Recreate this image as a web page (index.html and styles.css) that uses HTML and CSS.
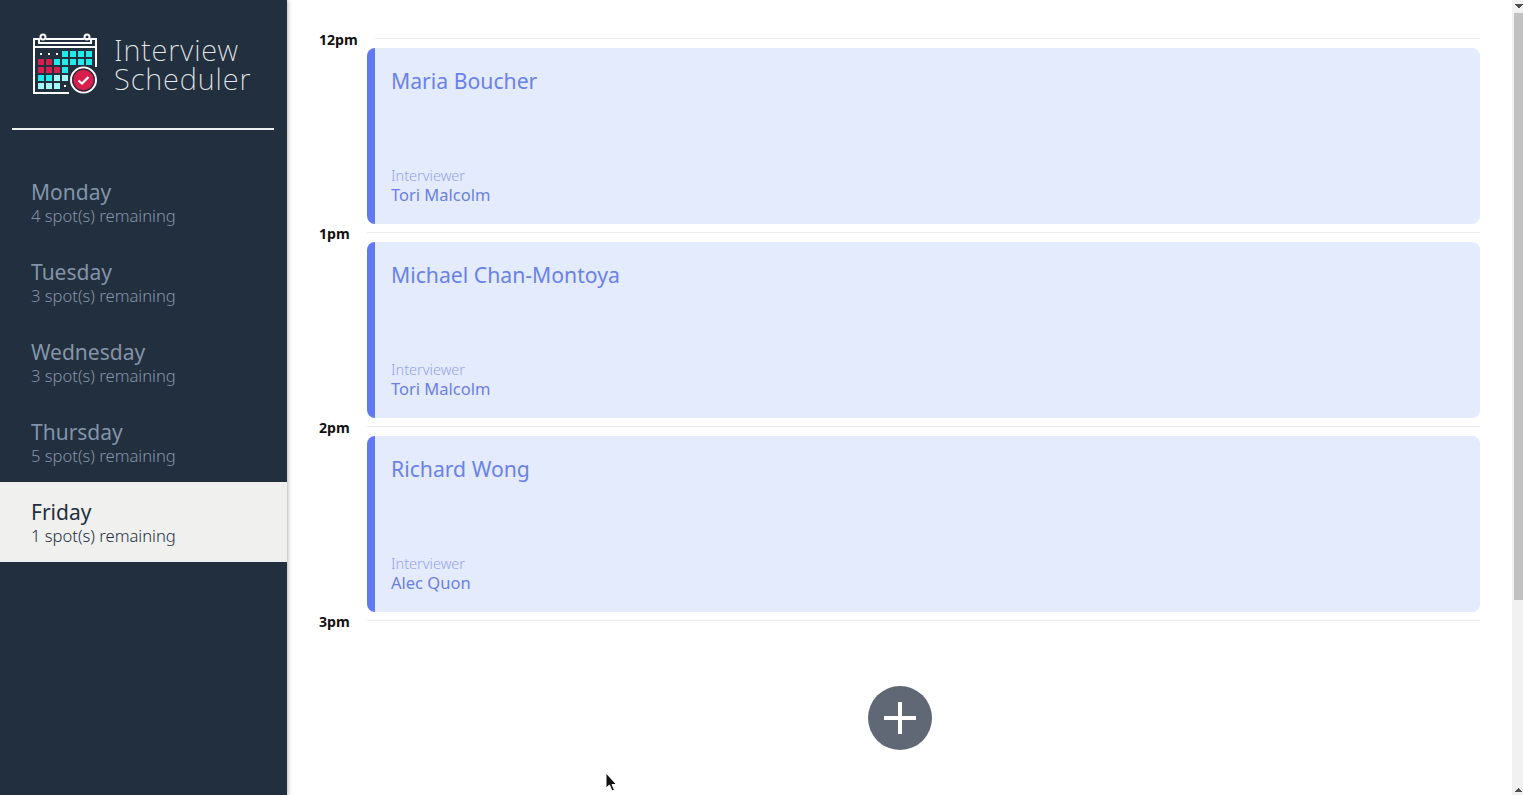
FILE: index.html
```html
<!DOCTYPE html>
<html lang="en">
<head>
    <meta charset="UTF-8">
    <title>Interview Scheduler</title>
    <link rel="stylesheet" href="styles.css">
</head>
<body>
    <nav class="sidebar">
        <div class="brand">
            <svg class="brand-logo" width="66" height="62" viewBox="32 33 66 62">
                <g fill="none" stroke="#fff" stroke-width="2">
                    <path d="M69 93H34V39H40M86 39H96V67"/>
                    <path d="M34 47H96"/>
                    <path d="M40 39H39V43H91V39H90M46 39H84"/>
                    <circle cx="43" cy="37" r="2.500"/>
                    <circle cx="87" cy="37" r="2.500"/>
                </g>
                <g fill="#fff">
                    <rect x="40" y="53" width="2" height="2"/>
                    <rect x="48" y="53" width="2" height="2"/>
                    <rect x="56" y="53" width="2" height="2"/>
                    <rect x="64" y="85" width="2" height="2"/>
                </g>
                <g fill="#22eaea">
                    <rect x="62" y="51" width="6" height="6"/>
                    <rect x="70" y="51" width="6" height="6"/>
                    <rect x="78" y="51" width="6" height="6"/>
                    <rect x="86" y="51" width="6" height="6"/>
                    <rect x="54" y="59" width="6" height="6"/>
                    <rect x="62" y="59" width="6" height="6"/>
                    <rect x="70" y="59" width="6" height="6"/>
                    <rect x="78" y="59" width="6" height="6"/>
                    <rect x="86" y="59" width="6" height="6"/>
                    <rect x="62" y="67" width="6" height="6"/>
                    <rect x="38" y="75" width="6" height="6"/>
                    <rect x="46" y="75" width="6" height="6"/>
                </g>
                <g fill="#d81e4c">
                    <rect x="38" y="59" width="6" height="6"/>
                    <rect x="46" y="59" width="6" height="6"/>
                    <rect x="38" y="67" width="6" height="6"/>
                    <rect x="46" y="67" width="6" height="6"/>
                    <rect x="54" y="67" width="6" height="6"/>
                </g>
                <g fill="#a5fafa">
                    <rect x="54" y="75" width="6" height="6"/>
                    <rect x="62" y="75" width="6" height="6"/>
                    <rect x="38" y="83" width="6" height="6"/>
                    <rect x="46" y="83" width="6" height="6"/>
                    <rect x="54" y="83" width="6" height="6"/>
                </g>
                <circle cx="83.500" cy="80" r="12.500" fill="#d81e4c" stroke="#fff" stroke-width="2"/>
                <circle cx="83.500" cy="80" r="10.800" fill="none" stroke="#222f3e" stroke-width="1.200"/>
                <path d="M78.500 80.500L82 83.500L88.500 77" fill="none" stroke="#fff" stroke-width="2.200"/>
            </svg>
            <div class="brand-name">Interview<br>Scheduler</div>
        </div>
        <hr class="sidebar-sep">
        <ul class="day-list">
            <li class="day"><h2>Monday</h2><p>4 spot(s) remaining</p></li>
            <li class="day"><h2>Tuesday</h2><p>3 spot(s) remaining</p></li>
            <li class="day"><h2>Wednesday</h2><p>3 spot(s) remaining</p></li>
            <li class="day"><h2>Thursday</h2><p>5 spot(s) remaining</p></li>
            <li class="day day-selected"><h2>Friday</h2><p>1 spot(s) remaining</p></li>
        </ul>
    </nav>

    <main class="schedule">
        <article class="slot">
            <header class="slot-head"><h4>12pm</h4><hr></header>
            <div class="card">
                <h2>Maria Boucher</h2>
                <div class="card-foot">
                    <h4>Interviewer</h4>
                    <h3>Tori Malcolm</h3>
                </div>
            </div>
        </article>
        <article class="slot">
            <header class="slot-head"><h4>1pm</h4><hr></header>
            <div class="card">
                <h2>Michael Chan-Montoya</h2>
                <div class="card-foot">
                    <h4>Interviewer</h4>
                    <h3>Tori Malcolm</h3>
                </div>
            </div>
        </article>
        <article class="slot">
            <header class="slot-head"><h4>2pm</h4><hr></header>
            <div class="card">
                <h2>Richard Wong</h2>
                <div class="card-foot">
                    <h4>Interviewer</h4>
                    <h3>Alec Quon</h3>
                </div>
            </div>
        </article>
        <article class="slot slot-last">
            <header class="slot-head"><h4>3pm</h4><hr></header>
            <button class="add-btn" aria-label="Add">
                <svg width="32" height="32" viewBox="0 0 32 32"><path d="M0 14H32V18H0ZM14 0H18V32H14Z" fill="#fff"/></svg>
            </button>
        </article>
    </main>

    <div class="scrollbar">
        <div class="scroll-arrow scroll-arrow-up"></div>
        <div class="scroll-thumb"></div>
        <div class="scroll-rest"></div>
        <div class="scroll-arrow scroll-arrow-down"></div>
    </div>

    <svg class="cursor" width="14" height="20" viewBox="0 0 14 20">
        <path d="M1 1V16L4.500 13L7 19L9.500 18L7 12.500H11.500Z" fill="#111" stroke="#fff" stroke-width="1"/>
    </svg>
</body>
</html>
```

FILE: styles.css
```css
* {
    box-sizing: border-box;
}
html, body {
    height: 100%;
}
body {
    margin: 0;
    display: flex;
    overflow: hidden;
    background-color: white;
    font-family: "Noto Sans", sans-serif;
}
h2, h3, h4, p, ul {
    margin: 0;
    padding: 0;
}

.sidebar {
    width: 287px;
    flex-shrink: 0;
    background-color: #222f3e;
    box-shadow: 1px 0 4px rgba(0, 0, 0, 0.3);
    z-index: 1;
}
.brand {
    display: flex;
    height: 128px;
    padding: 33px 0 0 32px;
}
.brand-logo {
    margin-right: 16px;
}
.brand-name {
    height: 60px;
    font-weight: 200;
    font-size: 29px;
    line-height: 29px;
    letter-spacing: 0.9px;
    color: #e6e8ea;
    padding-top: 2px;
}
.sidebar-sep {
    height: 2px;
    margin: 0 13px 32px 12px;
    border: none;
    background-color: #f0f0f0;
}
.day-list {
    list-style: none;
}
.day {
    height: 80px;
    padding: 16px 0 0 31px;
    color: #8494a8;
}
.day h2 {
    font-weight: 400;
    font-size: 21px;
    line-height: 28px;
}
.day p {
    font-weight: 300;
    font-size: 16.600px;
    line-height: 20px;
}
.day-selected {
    background-color: #f0f0ee;
    color: #222f3e;
}

.schedule {
    flex: 1;
    padding: 0 32px;
}
.scrollbar {
    display: flex;
    flex-direction: column;
    width: 11px;
    flex-shrink: 0;
    background-color: #f1f1f1;
}
.scroll-arrow {
    height: 13px;
    background-repeat: no-repeat;
    background-size: 4px 4px;
}
.scroll-arrow-up {
    background-image: linear-gradient(to top right, transparent 50%, #505050 50%), linear-gradient(to top left, transparent 50%, #505050 50%);
    background-position: 3px 4px, 7px 4px;
}
.scroll-arrow-down {
    background-image: linear-gradient(to bottom right, transparent 50%, #505050 50%), linear-gradient(to bottom left, transparent 50%, #505050 50%);
    background-position: 3px 6px, 7px 6px;
}
.scroll-thumb {
    height: 587px;
    margin-left: 2px;
    background-color: #c1c1c1;
}
.scroll-rest {
    flex: 1;
}

.slot {
    height: 194px;
    padding-top: 30px;
}
.slot-head {
    display: flex;
    align-items: center;
    height: 18px;
}
.slot-head h4 {
    position: relative;
    top: 1px;
    font-weight: 700;
    font-size: 14.100px;
    line-height: 18px;
    color: #111;
    margin-right: 17px;
}
.slot-head hr {
    flex: 1;
    height: 1px;
    margin: -2px 0 0;
    border: none;
    background-color: #ececec;
}
.card {
    display: flex;
    flex-direction: column;
    justify-content: space-between;
    height: 176px;
    margin-left: 48px;
    padding: 17px 16px 19px;
    background-color: #e4ebfc;
    border-left: 8px solid #6079f0;
    border-radius: 8px;
    color: #6a82e8;
}
.card h2 {
    font-weight: 400;
    font-size: 21.200px;
    line-height: 32px;
}
.card-foot h4 {
    font-weight: 300;
    font-size: 14.500px;
    line-height: 20px;
    color: #94a4ec;
}
.card-foot h3 {
    font-weight: 400;
    font-size: 16.500px;
    line-height: 20px;
    color: #6a80e0;
}

.slot-last {
    height: auto;
}
.add-btn {
    display: flex;
    align-items: center;
    justify-content: center;
    width: 64px;
    height: 64px;
    margin: 56px auto 0;
    padding: 0;
    border: none;
    border-radius: 50%;
    background-color: #5f6874;
}

.cursor {
    position: absolute;
    left: 605px;
    top: 772px;
}
```
